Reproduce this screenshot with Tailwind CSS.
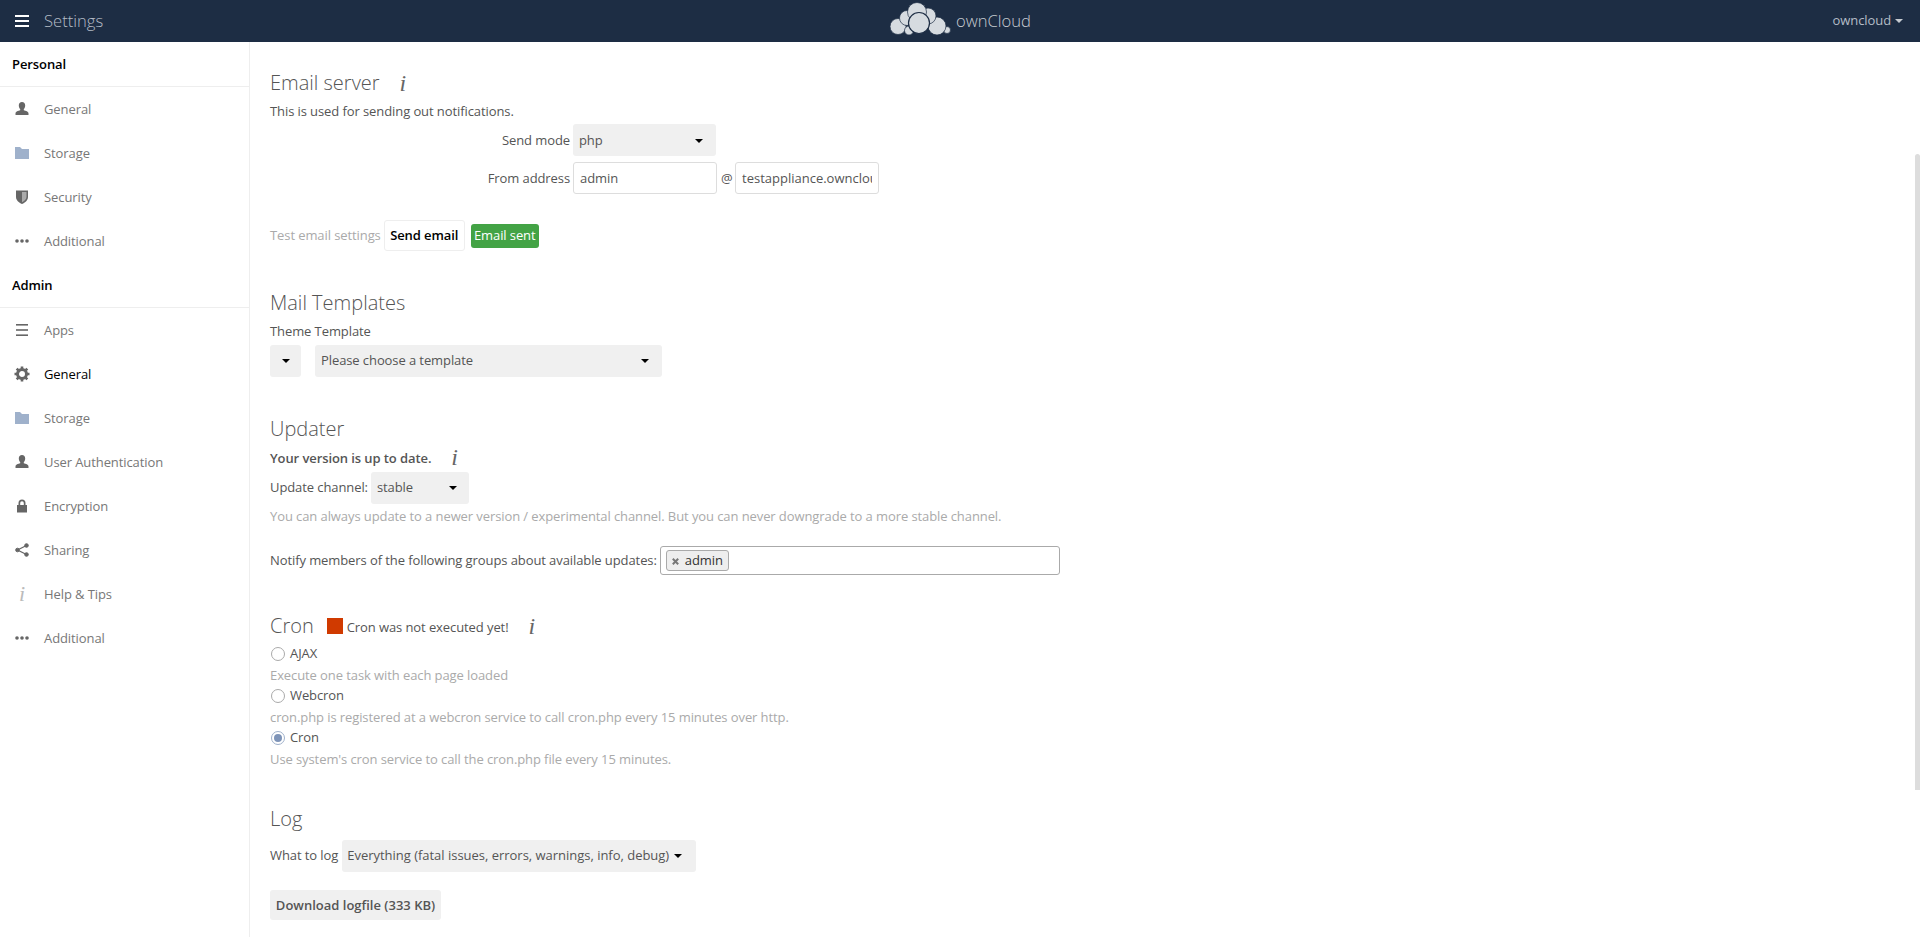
<!DOCTYPE html>
<html lang="en">

<head>
    <meta charset="utf-8">
    <title>Settings - ownCloud</title>
    <script src="https://cdn.jsdelivr.net/npm/@tailwindcss/browser@4"></script>
</head>

<body class="h-[937px] overflow-hidden bg-white font-['Open_Sans',sans-serif] text-[13px] tracking-[-0.09px] text-[#555]">
    <!-- top bar -->
    <header class="relative flex h-[42px] items-center justify-between bg-[#1d2d44]">
        <div class="flex items-center">
            <svg class="ml-[15px] h-[14px] w-[14px]" viewBox="0 0 14 14" fill="#fff">
                <rect y="1" width="14" height="2" />
                <rect y="6" width="14" height="2" />
                <rect y="11" width="14" height="2" />
            </svg>
            <span class="ml-[15px] text-[16.600px] font-light tracking-normal text-[#b4bcc6]">Settings</span>
        </div>
        <div class="absolute left-[885px] top-0 flex h-[42px] items-center">
            <svg class="h-[42px] w-[70px]" viewBox="0 0 70 42" fill="#d6dbe0" stroke="#1d2d44" stroke-width=".7">
                <circle cx="62" cy="30" r="3.500" />
                <circle cx="13" cy="26.500" r="8" />
                <circle cx="52" cy="26" r="9" />
                <circle cx="22" cy="18" r="7.500" />
                <circle cx="43" cy="16" r="8" />
                <circle cx="24" cy="30.500" r="4.500" />
                <circle cx="32" cy="12" r="9.500" />
                <circle cx="34" cy="23" r="10.500" stroke-width="1.200" />
            </svg>
            <span class="ml-[1px] text-[16.600px] font-light tracking-normal text-[#c6cbd1]">ownCloud</span>
        </div>
        <div class="mr-[17px] flex items-center text-[13px] text-[#b4bcc6]">
            owncloud
            <span class="ml-[4px] h-0 w-0 border-x-[4px] border-t-[4px] border-x-transparent border-t-[#c6cbd1]"></span>
        </div>
    </header>

    <div class="flex h-[895px]">
        <!-- sidebar -->
        <nav class="w-[250px] shrink-0 border-r border-[#eee] text-[#777]">
            <div class="flex h-[45px] items-center border-b border-[#eee] pl-[12px] pt-[1px] font-semibold text-[#000]">Personal</div>
            <a class="flex h-[44px] items-center">
                <svg class="ml-[15px] h-[14px] w-[14px]" viewBox="0 0 14 14" fill="#666">
                    <path d="M7 0c2 0 3.200 1.500 3.200 3.500 0 1.500-.6 2.800-1.400 3.600v1.200c2 .6 4.700 1.300 4.700 3.200v1.500H.5v-1.500c0-1.900 2.700-2.600 4.700-3.200V7.100C4.400 6.300 3.800 5 3.800 3.500 3.800 1.500 5 0 7 0z" />
                </svg>
                <span class="ml-[15px] pt-[2px]">General</span>
            </a>
            <a class="flex h-[44px] items-center">
                <svg class="ml-[15px] h-[14px] w-[14px]" viewBox="0 0 14 14" fill="#9fb1cb">
                    <path d="M0 1h5l2 2h7v10H0z" />
                </svg>
                <span class="ml-[15px] pt-[2px]">Storage</span>
            </a>
            <a class="flex h-[44px] items-center">
                <svg class="ml-[15px] h-[14px] w-[14px]" viewBox="0 0 14 14" fill="#666">
                    <path d="M1 0.500h12v6.500c0 3.200-2.800 5.700-6 7-3.200-1.300-6-3.800-6-7z" />
                    <path d="M7 2h4.500v5c0 2.200-2.200 4-4.500 5.200z" fill="#fff" fill-opacity=".45" />
                </svg>
                <span class="ml-[15px] pt-[2px]">Security</span>
            </a>
            <a class="flex h-[44px] items-center">
                <svg class="ml-[15px] h-[14px] w-[14px]" viewBox="0 0 14 14" fill="#666">
                    <circle cx="2" cy="7" r="1.800" />
                    <circle cx="7" cy="7" r="1.800" />
                    <circle cx="12" cy="7" r="1.800" />
                </svg>
                <span class="ml-[15px] pt-[2px]">Additional</span>
            </a>
            <div class="flex h-[45px] items-center border-b border-[#eee] pl-[12px] pt-[1px] font-semibold text-[#000]">Admin</div>
            <a class="flex h-[44px] items-center">
                <svg class="ml-[15px] h-[14px] w-[14px]" viewBox="0 0 14 14" fill="#666">
                    <rect x="1" y="1" width="12" height="1.600" />
                    <rect x="1" y="6.200" width="12" height="1.600" />
                    <rect x="1" y="11.400" width="12" height="1.600" />
                </svg>
                <span class="ml-[15px] pt-[2px]">Apps</span>
            </a>
            <a class="flex h-[44px] items-center">
                <svg class="ml-[14px] h-[16px] w-[16px]" viewBox="0 0 16 16" fill="none" stroke="#666">
                    <circle cx="8" cy="8" r="4.500" stroke-width="3" />
                    <path stroke-width="2.600" d="M8 .5v2.500M8 13v2.500M.5 8H3M13 8h2.500M2.700 2.700l1.800 1.800M11.500 11.500l1.800 1.800M2.700 13.300l1.800-1.800M11.500 4.500l1.800-1.800" />
                </svg>
                <span class="ml-[14px] pt-[2px] text-[#000]">General</span>
            </a>
            <a class="flex h-[44px] items-center">
                <svg class="ml-[15px] h-[14px] w-[14px]" viewBox="0 0 14 14" fill="#9fb1cb">
                    <path d="M0 1h5l2 2h7v10H0z" />
                </svg>
                <span class="ml-[15px] pt-[2px]">Storage</span>
            </a>
            <a class="flex h-[44px] items-center">
                <svg class="ml-[15px] h-[14px] w-[14px]" viewBox="0 0 14 14" fill="#666">
                    <path d="M7 0c2 0 3.200 1.500 3.200 3.500 0 1.500-.6 2.800-1.400 3.600v1.200c2 .6 4.700 1.300 4.700 3.200v1.500H.5v-1.500c0-1.900 2.700-2.600 4.700-3.200V7.100C4.400 6.300 3.800 5 3.800 3.500 3.800 1.500 5 0 7 0z" />
                </svg>
                <span class="ml-[15px] pt-[2px]">User Authentication</span>
            </a>
            <a class="flex h-[44px] items-center">
                <svg class="ml-[15px] h-[14px] w-[14px]" viewBox="0 0 14 14" fill="#666">
                    <path d="M2 6h1.500V4a3.500 3.500 0 0 1 7 0v2H12v7.500H2zM5.200 6h3.600V4a1.800 1.800 0 0 0-3.600 0z" fill-rule="evenodd" />
                </svg>
                <span class="ml-[15px] pt-[2px]">Encryption</span>
            </a>
            <a class="flex h-[44px] items-center">
                <svg class="ml-[15px] h-[14px] w-[14px]" viewBox="0 0 14 14" fill="#666" stroke="#666">
                    <path stroke-width="1.300" fill="none" d="M11.500 2.500 2.500 7l9 4.500" />
                    <circle cx="11.500" cy="2.500" r="1.800" />
                    <circle cx="2.500" cy="7" r="1.800" />
                    <circle cx="11.500" cy="11.500" r="1.800" />
                </svg>
                <span class="ml-[15px] pt-[2px]">Sharing</span>
            </a>
            <a class="flex h-[44px] items-center">
                <span class="ml-[15px] w-[14px] text-center font-['Liberation_Serif',serif] text-[22px] italic leading-none text-[#bbb]">i</span>
                <span class="ml-[15px] pt-[2px]">Help &amp; Tips</span>
            </a>
            <a class="flex h-[44px] items-center">
                <svg class="ml-[15px] h-[14px] w-[14px]" viewBox="0 0 14 14" fill="#666">
                    <circle cx="2" cy="7" r="1.800" />
                    <circle cx="7" cy="7" r="1.800" />
                    <circle cx="12" cy="7" r="1.800" />
                </svg>
                <span class="ml-[15px] pt-[2px]">Additional</span>
            </a>
        </nav>

        <!-- main content -->
        <main class="relative flex-1 overflow-hidden pl-[20px]">
            <section class="pt-[26px]">
                <h2 class="flex h-[30px] items-center text-[20px] font-light tracking-normal text-[#555]">
                    Email server
                    <span class="ml-[20px] font-['Liberation_Serif',serif] text-[24px] italic text-[#666]">i</span>
                </h2>
                <p class="mt-[4px] flex h-[20px] items-center">This is used for sending out notifications.</p>
                <div class="mt-[2px] flex h-[32px] items-center">
                    <label class="mr-[3px] w-[300px] pt-[1px] text-right">Send mode</label>
                    <div class="flex h-[32px] w-[143px] items-center justify-between rounded-[3px] bg-[#f0f0f0] pl-[6px] pr-[13px] pt-[1px] text-[#555]">
                        php
                        <span class="h-0 w-0 border-x-[4px] border-t-[4px] border-x-transparent border-t-[#000]"></span>
                    </div>
                </div>
                <div class="mt-[6px] flex h-[32px] items-center">
                    <label class="mr-[3px] w-[300px] pt-[1px] text-right">From address</label>
                    <div class="flex h-[32px] w-[144px] items-center rounded-[3px] border border-[#ddd] pl-[6px] pt-[1px]">admin</div>
                    <span class="ml-[4px] mr-[3px] w-[11px] pt-[1px]">@</span>
                    <div class="flex h-[32px] w-[144px] items-center overflow-hidden whitespace-nowrap rounded-[3px] border border-[#ddd] px-[6px] pt-[1px]"><span class="w-[130px] overflow-hidden tracking-normal">testappliance.owncloud</span></div>
                </div>
                <div class="mt-[26px] flex h-[31px] items-center">
                    <span class="mr-[3px] text-[#aaa]">Test email settings</span>
                    <button class="h-[31px] w-[81px] rounded-[3px] border border-[#eee] bg-white font-semibold text-[#000]">Send email</button>
                    <span class="ml-[6px] flex h-[24px] w-[68px] items-center justify-center rounded-[3px] bg-[#43a345] text-white">Email sent</span>
                </div>
            </section>

            <section class="mt-[37px]">
                <h2 class="flex h-[30px] items-center text-[20px] font-light tracking-normal text-[#555]">Mail Templates</h2>
                <p class="mt-[4px] flex h-[20px] items-center">Theme Template</p>
                <div class="mt-[3px] flex">
                    <div class="flex h-[32px] w-[31px] items-center justify-center rounded-[3px] bg-[#f0f0f0]">
                        <span class="h-0 w-0 border-x-[4px] border-t-[4px] border-x-transparent border-t-[#000]"></span>
                    </div>
                    <div class="ml-[14px] flex h-[32px] w-[347px] items-center justify-between rounded-[3px] bg-[#f0f0f0] pl-[6px] pr-[13px]">
                        Please choose a template
                        <span class="h-0 w-0 border-x-[4px] border-t-[4px] border-x-transparent border-t-[#000]"></span>
                    </div>
                </div>
            </section>

            <section class="mt-[37px]">
                <h2 class="flex h-[30px] items-center text-[20px] font-light tracking-normal text-[#555]">Updater</h2>
                <div class="mt-[5px] flex h-[20px] items-center font-semibold">
                    Your version is up to date.
                    <span class="-mt-[4px] ml-[20px] font-['Liberation_Serif',serif] text-[24px] font-normal italic text-[#666]">i</span>
                </div>
                <div class="mt-[3px] flex h-[32px] items-center">
                    <label class="mr-[3px]">Update channel:</label>
                    <div class="flex h-[32px] w-[98px] items-center justify-between rounded-[3px] bg-[#f0f0f0] pl-[6px] pr-[12px]">
                        stable
                        <span class="h-0 w-0 border-x-[4px] border-t-[4px] border-x-transparent border-t-[#000]"></span>
                    </div>
                </div>
                <p class="mt-[3px] flex h-[20px] items-center text-[#aaa]">You can always update to a newer version / experimental channel. But you can never downgrade to a more stable channel.</p>
                <div class="mt-[19px] flex h-[29px] items-center">
                    <label class="mr-[3px]">Notify members of the following groups about available updates:</label>
                    <div class="flex h-[29px] w-[400px] items-center rounded-[3px] border border-[#aaa] pl-[5px]">
                        <span class="flex h-[21px] w-[63px] items-center rounded-[3px] border border-[#aaa] bg-[#eee] pl-[5px] text-[#333]">
                            <svg class="mr-[6px] mt-[1px] h-[7px] w-[7px]" viewBox="0 0 7 7" fill="none" stroke="#777" stroke-width="2">
                                <path d="M.8.8l5.400 5.400M6.200.8.8 6.200" />
                            </svg>admin
                        </span>
                    </div>
                </div>
            </section>

            <section class="mt-[36px]">
                <h2 class="flex h-[30px] items-center text-[20px] font-light tracking-normal text-[#555]">
                    Cron
                    <span class="ml-[13px] h-[16px] w-[16px] bg-[#d03a00]"></span>
                    <span class="ml-[4px] pt-[3px] text-[13px] font-normal tracking-[-0.09px]">Cron was not executed yet!</span>
                    <span class="ml-[20px] font-['Liberation_Serif',serif] text-[24px] font-normal italic text-[#666]">i</span>
                </h2>
                <label class="mt-[3px] flex h-[20px] items-center">
                    <span class="ml-[1px] mr-[5px] h-[14px] w-[14px] rounded-full border border-[#aaa] bg-white"></span>AJAX
                </label>
                <p class="mt-[2px] flex h-[20px] items-center text-[#aaa]">Execute one task with each page loaded</p>
                <label class="flex h-[20px] items-center">
                    <span class="ml-[1px] mr-[5px] h-[14px] w-[14px] rounded-full border border-[#aaa] bg-white"></span>Webcron
                </label>
                <p class="mt-[2px] flex h-[20px] items-center text-[#aaa]">cron.php is registered at a webcron service to call cron.php every 15 minutes over http.</p>
                <label class="flex h-[20px] items-center">
                    <span class="ml-[1px] mr-[5px] flex h-[14px] w-[14px] items-center justify-center rounded-full border border-[#9fb1cb] bg-white">
                        <span class="h-[8px] w-[8px] rounded-full bg-[#7e94b8]"></span>
                    </span>Cron
                </label>
                <p class="mt-[2px] flex h-[20px] items-center text-[#aaa]">Use system's cron service to call the cron.php file every 15 minutes.</p>
            </section>

            <section class="mt-[34px]">
                <h2 class="flex h-[30px] items-center text-[20px] font-light tracking-normal text-[#555]">Log</h2>
                <div class="mt-[6px] flex h-[32px] items-center">
                    <label class="mr-[4px]">What to log</label>
                    <div class="flex h-[32px] w-[354px] items-center rounded-[3px] bg-[#f0f0f0] pl-[5px] tracking-[-0.02px]">
                        Everything (fatal issues, errors, warnings, info, debug)
                        <span class="ml-[5px] h-0 w-0 border-x-[4px] border-t-[4px] border-x-transparent border-t-[#000]"></span>
                    </div>
                </div>
                <button class="mt-[18px] h-[30px] w-[171px] rounded-[3px] bg-[#f0f0f0] pt-[1px] font-semibold tracking-normal">Download logfile (333 KB)</button>
            </section>

            <!-- scrollbar thumb -->
            <div class="absolute right-0 top-[112px] h-[636px] w-[5px] rounded-t-[3px] bg-[#ddd]"></div>
        </main>
    </div>
</body>

</html>
